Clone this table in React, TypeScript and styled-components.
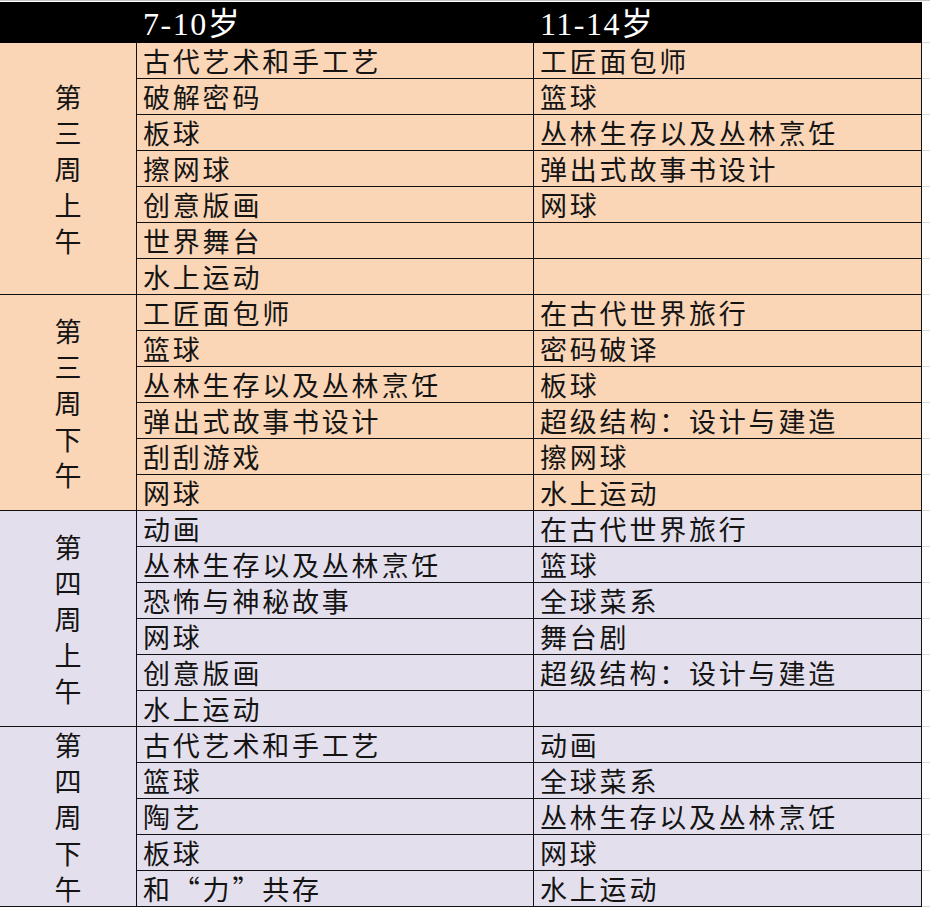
import React from "react"
import styled, { createGlobalStyle } from "styled-components"

const GlobalStyle = createGlobalStyle`
    html, body {
        margin: 0;
        padding: 0;
        background: #ffffff;
    }
`

const palette = {
    peach: "#fad5b6",
    lavender: "#e4dfec",
    line: "#111111",
    grid: "#dadada",
}

interface ISection {
    label: string
    tone: "peach" | "lavender"
    rows: [string, string][]
}

const sections: ISection[] = [
    {
        label: "第三周上午",
        tone: "peach",
        rows: [
            ["古代艺术和手工艺", "工匠面包师"],
            ["破解密码", "篮球"],
            ["板球", "丛林生存以及丛林烹饪"],
            ["擦网球", "弹出式故事书设计"],
            ["创意版画", "网球"],
            ["世界舞台", ""],
            ["水上运动", ""],
        ],
    },
    {
        label: "第三周下午",
        tone: "peach",
        rows: [
            ["工匠面包师", "在古代世界旅行"],
            ["篮球", "密码破译"],
            ["丛林生存以及丛林烹饪", "板球"],
            ["弹出式故事书设计", "超级结构：设计与建造"],
            ["刮刮游戏", "擦网球"],
            ["网球", "水上运动"],
        ],
    },
    {
        label: "第四周上午",
        tone: "lavender",
        rows: [
            ["动画", "在古代世界旅行"],
            ["丛林生存以及丛林烹饪", "篮球"],
            ["恐怖与神秘故事", "全球菜系"],
            ["网球", "舞台剧"],
            ["创意版画", "超级结构：设计与建造"],
            ["水上运动", ""],
        ],
    },
    {
        label: "第四周下午",
        tone: "lavender",
        rows: [
            ["古代艺术和手工艺", "动画"],
            ["篮球", "全球菜系"],
            ["陶艺", "丛林生存以及丛林烹饪"],
            ["板球", "网球"],
            ["和“力”共存", "水上运动"],
        ],
    },
]

const Sheet = styled.div`
    width: 930px;
    border-top: 1px solid #c4c4c4;
    padding-top: 1px;
    font-family: "Noto Sans CJK SC", "Liberation Serif", serif;
    color: #141414;
`

const Grid = styled.div`
    display: grid;
    grid-template-columns: 137px 397px 388px 1fr;
`

const HeaderRow = styled(Grid)`
    grid-template-rows: 41px;
`

const HeaderCell = styled.div`
    box-sizing: border-box;
    background: #000000;
    color: #ffffff;
    font-family: "Liberation Serif", "Noto Sans CJK SC", serif;
    font-size: 32px;
    line-height: 38px;
    padding: 3px 0 0 6px;
    letter-spacing: 1.5px;
    white-space: nowrap;
`

const Block = styled(Grid)<{ $tone: "peach" | "lavender" }>`
    grid-auto-rows: 36px;
    background: ${props => palette[props.$tone]};
`

const Label = styled.div<{ $span: number }>`
    grid-row: span ${props => props.$span};
    display: flex;
    flex-direction: column;
    align-items: center;
    justify-content: center;
    border-right: 1px solid ${palette.line};
    border-bottom: 1px solid ${palette.line};
    font-size: 27px;
    line-height: 36px;
`

const Cell = styled.div`
    box-sizing: border-box;
    border-right: 1px solid ${palette.line};
    border-bottom: 1px solid ${palette.line};
    padding-left: 6px;
    font-size: 27px;
    line-height: 35px;
    letter-spacing: 2.8px;
    white-space: nowrap;
`

const Gutter = styled.div`
    box-sizing: border-box;
    background: #ffffff;
    border-bottom: 1px solid ${palette.grid};
`

const Section = ({ section }: { section: ISection }) => (
    <Block $tone={section.tone}>
        <Label $span={section.rows.length}>
            {section.label.split("").map((ch, i) => (
                <span key={i}>{ch}</span>
            ))}
        </Label>
        {section.rows.map(([young, old], i) => (
            <React.Fragment key={i}>
                <Cell>{young}</Cell>
                <Cell>{old}</Cell>
                <Gutter />
            </React.Fragment>
        ))}
    </Block>
)

export default function App() {
    return (
        <>
            <GlobalStyle />
            <Sheet>
                <HeaderRow>
                    <HeaderCell />
                    <HeaderCell>7-10岁</HeaderCell>
                    <HeaderCell>11-14岁</HeaderCell>
                    <Gutter />
                </HeaderRow>
                {sections.map((s, i) => (
                    <Section key={i} section={s} />
                ))}
            </Sheet>
        </>
    )
}
